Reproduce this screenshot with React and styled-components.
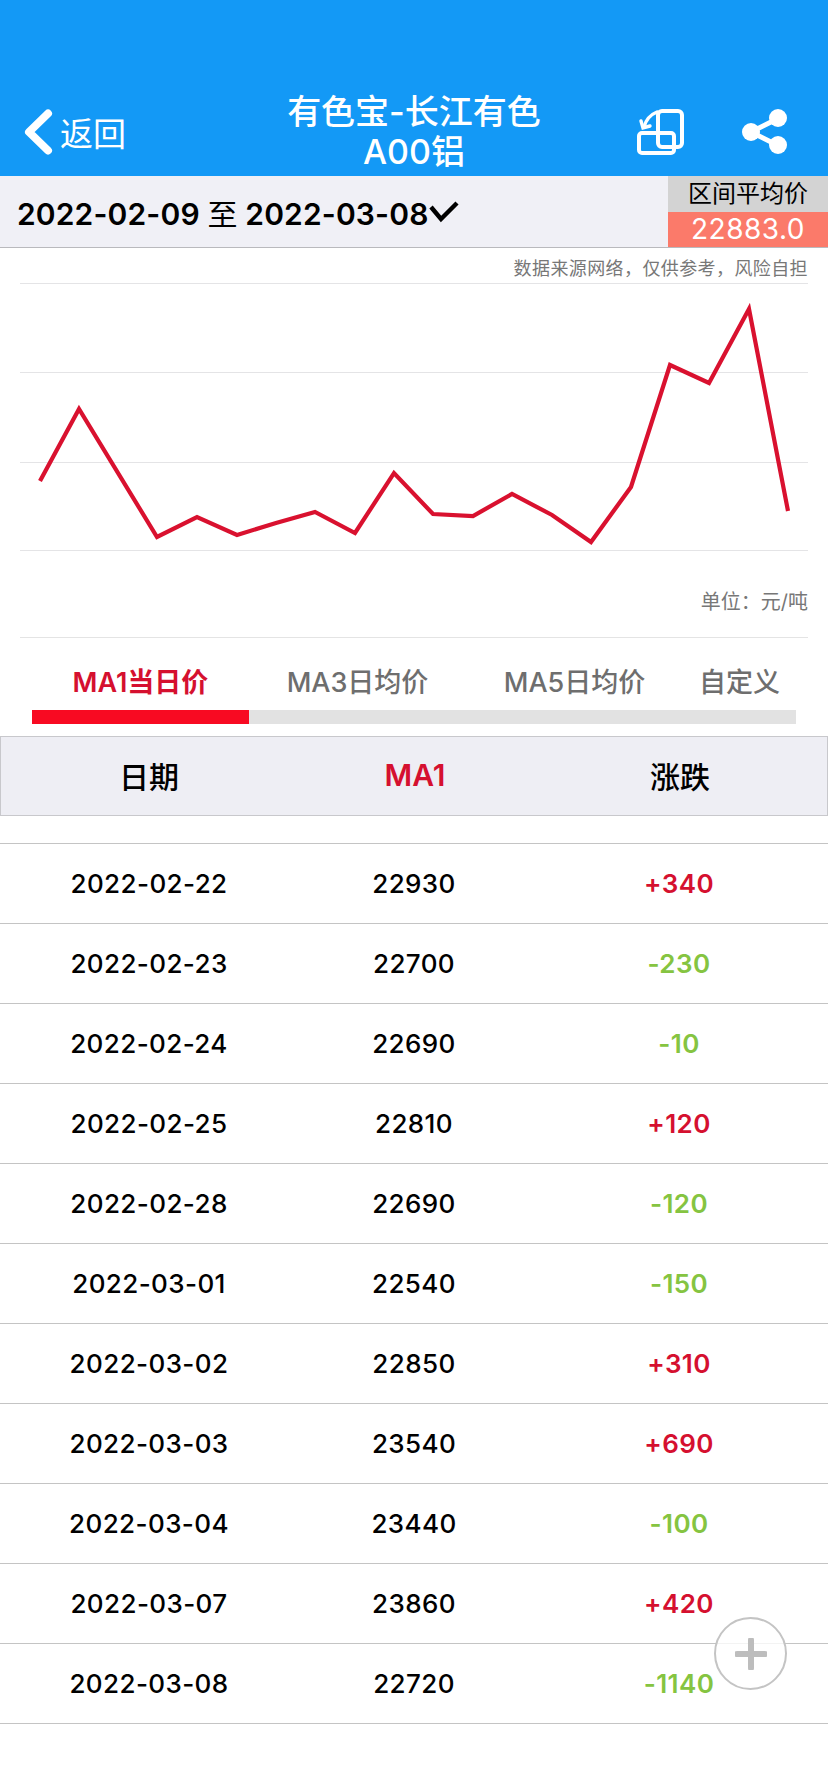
import React from "react";
import styled, { createGlobalStyle } from "styled-components";

const FONT = `Inter, "Noto Sans CJK SC", "Liberation Sans", sans-serif`;
const RED = "#d5102f";
const GREEN = "#85c441";

const GlobalStyle = createGlobalStyle`
  html, body {
    margin: 0;
    padding: 0;
    background: #fff;
  }
  body {
    font-family: ${FONT};
  }
`;

const Page = styled.div`
  position: relative;
  width: 828px;
  height: 1792px;
  overflow: hidden;
  background: #fff;
`;

const Header = styled.header`
  height: 88px;
  padding-top: 88px;
  background: #1399f6;
  color: #fff;
  display: grid;
  grid-template-columns: 1fr auto 1fr;
  align-items: center;
`;

const BackButton = styled.div`
  display: flex;
  align-items: center;
  gap: 7px;
  padding-left: 23px;
  font-size: 33px;
`;

const Title = styled.div`
  text-align: center;
  font-size: 34px;
  line-height: 40px;
  font-weight: 500;
`;

const Actions = styled.div`
  display: flex;
  justify-content: flex-end;
  align-items: center;
  gap: 58px;
  padding-right: 40px;
`;

const DateBar = styled.div`
  height: 71px;
  display: flex;
  align-items: center;
  justify-content: space-between;
  background: #f0f0f6;
  border-bottom: 1px solid #b9b9bd;
`;

const DateRange = styled.div`
  display: flex;
  align-items: center;
  padding-left: 17px;
  font-size: 30px;
  font-weight: 600;
  letter-spacing: 0.15px;
  color: #000;
  white-space: pre;
`;

const DateJoin = styled.span`
  font-weight: 400;
`;

const AvgPanel = styled.div`
  width: 160px;
  height: 100%;
  display: flex;
  flex-direction: column;
  text-align: center;
`;

const AvgLabel = styled.div`
  height: 36px;
  line-height: 36px;
  background: #d3d3d3;
  color: #000;
  font-size: 24px;
`;

const AvgValue = styled.div`
  flex: 1;
  line-height: 35px;
  background: #fb7a6a;
  color: #fff;
  font-size: 28px;
  letter-spacing: 0.5px;
`;

const Caption = styled.div`
  color: #777;
  text-align: right;
  padding-right: 20px;
`;

const Note = styled(Caption)`
  height: 35px;
  line-height: 41px;
  font-size: 18px;
  letter-spacing: 0.4px;
`;

const ChartSvg = styled.svg`
  display: block;
`;

const Unit = styled(Caption)`
  height: 87px;
  line-height: 102px;
  font-size: 20px;
  box-sizing: border-box;
  margin: 0 20px;
  padding-right: 0;
  border-bottom: 1px solid #e4e4e4;
`;

const Tabs = styled.div`
  margin: 0 32px;
`;

const TabLabels = styled.div`
  display: grid;
  grid-template-columns: 217px 217px 217px 1fr;
  height: 72px;
`;

const TabLabel = styled.div`
  text-align: center;
  font-size: 27px;
  line-height: 90px;
  font-weight: ${({ $active }) => ($active ? 600 : 500)};
  color: ${({ $active }) => ($active ? RED : "#6e6e6e")};
`;

const TabTrack = styled.div`
  height: 14px;
  background: #e2e2e2;
`;

const TabIndicator = styled.div`
  width: 217px;
  height: 100%;
  background: #f80a22;
`;

const Row = styled.div`
  display: grid;
  grid-template-columns: 298px 232px 298px;
  align-items: center;
  text-align: center;
  height: 80px;
  box-sizing: border-box;
`;

const TableHead = styled(Row)`
  grid-template-columns: 296px 236px 294px;
  margin-top: 12px;
  margin-bottom: 27px;
  padding-bottom: 3px;
  background: #eeeef4;
  border: 1px solid #c8c8cc;
  font-size: 30px;
  font-weight: 500;
  color: #000;
`;

const HeadCell = styled.div`
  color: ${({ $accent }) => ($accent ? RED : "#000")};
  font-weight: ${({ $accent }) => ($accent ? 600 : 500)};
`;

const TableBody = styled.div`
  border-top: 1px solid #c4c4c4;
`;

const DataRow = styled(Row)`
  border-bottom: 1px solid #c4c4c4;
  font-size: 26px;
  font-weight: 500;
  letter-spacing: 0.4px;
  color: #000;
`;

const Change = styled.div`
  font-weight: 600;
  color: ${({ $up }) => ($up ? RED : GREEN)};
`;

const FloatButton = styled.div`
  position: absolute;
  top: 1617px;
  left: 714px;
  width: 73px;
  height: 73px;
  box-sizing: border-box;
  border: 2px solid #c4c4c4;
  border-radius: 50%;
  background: rgba(255, 255, 255, 0.8);
  display: flex;
  align-items: center;
  justify-content: center;
`;

const rows = [
  ["2022-02-22", "22930", "+340"],
  ["2022-02-23", "22700", "-230"],
  ["2022-02-24", "22690", "-10"],
  ["2022-02-25", "22810", "+120"],
  ["2022-02-28", "22690", "-120"],
  ["2022-03-01", "22540", "-150"],
  ["2022-03-02", "22850", "+310"],
  ["2022-03-03", "23540", "+690"],
  ["2022-03-04", "23440", "-100"],
  ["2022-03-07", "23860", "+420"],
  ["2022-03-08", "22720", "-1140"],
];

// chart coordinates, y relative to the top of the chart svg (page y 283)
const points = [
  [40, 198], [79, 126], [157, 254], [197, 234], [237, 252], [276, 240], [315, 229],
  [355, 250], [394, 190], [433, 231], [473, 233], [512, 211], [552, 232], [591, 259],
  [631, 204], [670, 82], [709, 100], [749, 26], [788, 228],
];
const gridLines = [0.5, 89.5, 179.5, 267.5];

const Chart = () => (
  <ChartSvg width="828" height="268" viewBox="0 0 828 268">
    {gridLines.map((y) => (
      <line key={y} x1="20" x2="808" y1={y} y2={y} stroke="#e4e4e6" strokeWidth="1" />
    ))}
    <polyline
      points={points.map((p) => p.join(",")).join(" ")}
      fill="none"
      stroke="#d9112f"
      strokeWidth="4.2"
    />
  </ChartSvg>
);

const BackIcon = () => (
  <svg width="30" height="46" viewBox="0 0 30 46">
    <path d="M25 4.5 L6 23 L25 41.5" fill="none" stroke="#fff" strokeWidth="8" strokeLinecap="round" strokeLinejoin="round" />
  </svg>
);

const SwitchIcon = () => (
  <svg width="48" height="48" viewBox="0 0 48 48" fill="none" stroke="#fff" strokeWidth="4" strokeLinecap="round">
    <rect x="22" y="3" width="24" height="36" rx="4" />
    <rect x="3" y="25" width="35" height="20" rx="3" />
    <path d="M21 4 Q11 8 8 19" strokeWidth="3.4" />
    <path d="M5 13 L7 20 L14 18" strokeWidth="3.4" />
  </svg>
);

const ShareIcon = () => (
  <svg width="46" height="46" viewBox="0 0 46 46">
    <path d="M37 9 L9 23 L37 37" fill="none" stroke="#fff" strokeWidth="5" />
    <circle cx="36" cy="9" r="9" fill="#fff" />
    <circle cx="9" cy="23" r="9" fill="#fff" />
    <circle cx="36" cy="36" r="9" fill="#fff" />
  </svg>
);

const CheckIcon = () => (
  <svg width="30" height="22" viewBox="0 0 30 22">
    <path d="M2 6 L12 18 L28 2" fill="none" stroke="#000" strokeWidth="4.4" />
  </svg>
);

const PlusIcon = () => (
  <svg width="32" height="32" viewBox="0 0 32 32">
    <path d="M16 2 V30 M2 16 H30" stroke="#bdbdbd" strokeWidth="6" strokeLinecap="round" />
  </svg>
);

export default function App() {
  return (
    <Page>
      <GlobalStyle />
      <Header>
        <BackButton>
          <BackIcon />
          返回
        </BackButton>
        <Title>
          有色宝-长江有色
          <br />
          A00铝
        </Title>
        <Actions>
          <SwitchIcon />
          <ShareIcon />
        </Actions>
      </Header>
      <DateBar>
        <DateRange>
          <span>
            2022-02-09 <DateJoin>至</DateJoin> 2022-03-08
          </span>
          <CheckIcon />
        </DateRange>
        <AvgPanel>
          <AvgLabel>区间平均价</AvgLabel>
          <AvgValue>22883.0</AvgValue>
        </AvgPanel>
      </DateBar>
      <Note>数据来源网络，仅供参考，风险自担</Note>
      <Chart />
      <Unit>单位：元/吨</Unit>
      <Tabs>
        <TabLabels>
          <TabLabel $active>MA1当日价</TabLabel>
          <TabLabel>MA3日均价</TabLabel>
          <TabLabel>MA5日均价</TabLabel>
          <TabLabel>自定义</TabLabel>
        </TabLabels>
        <TabTrack>
          <TabIndicator />
        </TabTrack>
      </Tabs>
      <TableHead>
        <HeadCell>日期</HeadCell>
        <HeadCell $accent>MA1</HeadCell>
        <HeadCell>涨跌</HeadCell>
      </TableHead>
      <TableBody>
        {rows.map(([date, price, change]) => (
          <DataRow key={date}>
            <div>{date}</div>
            <div>{price}</div>
            <Change $up={change.startsWith("+")}>{change}</Change>
          </DataRow>
        ))}
      </TableBody>
      <FloatButton>
        <PlusIcon />
      </FloatButton>
    </Page>
  );
}
